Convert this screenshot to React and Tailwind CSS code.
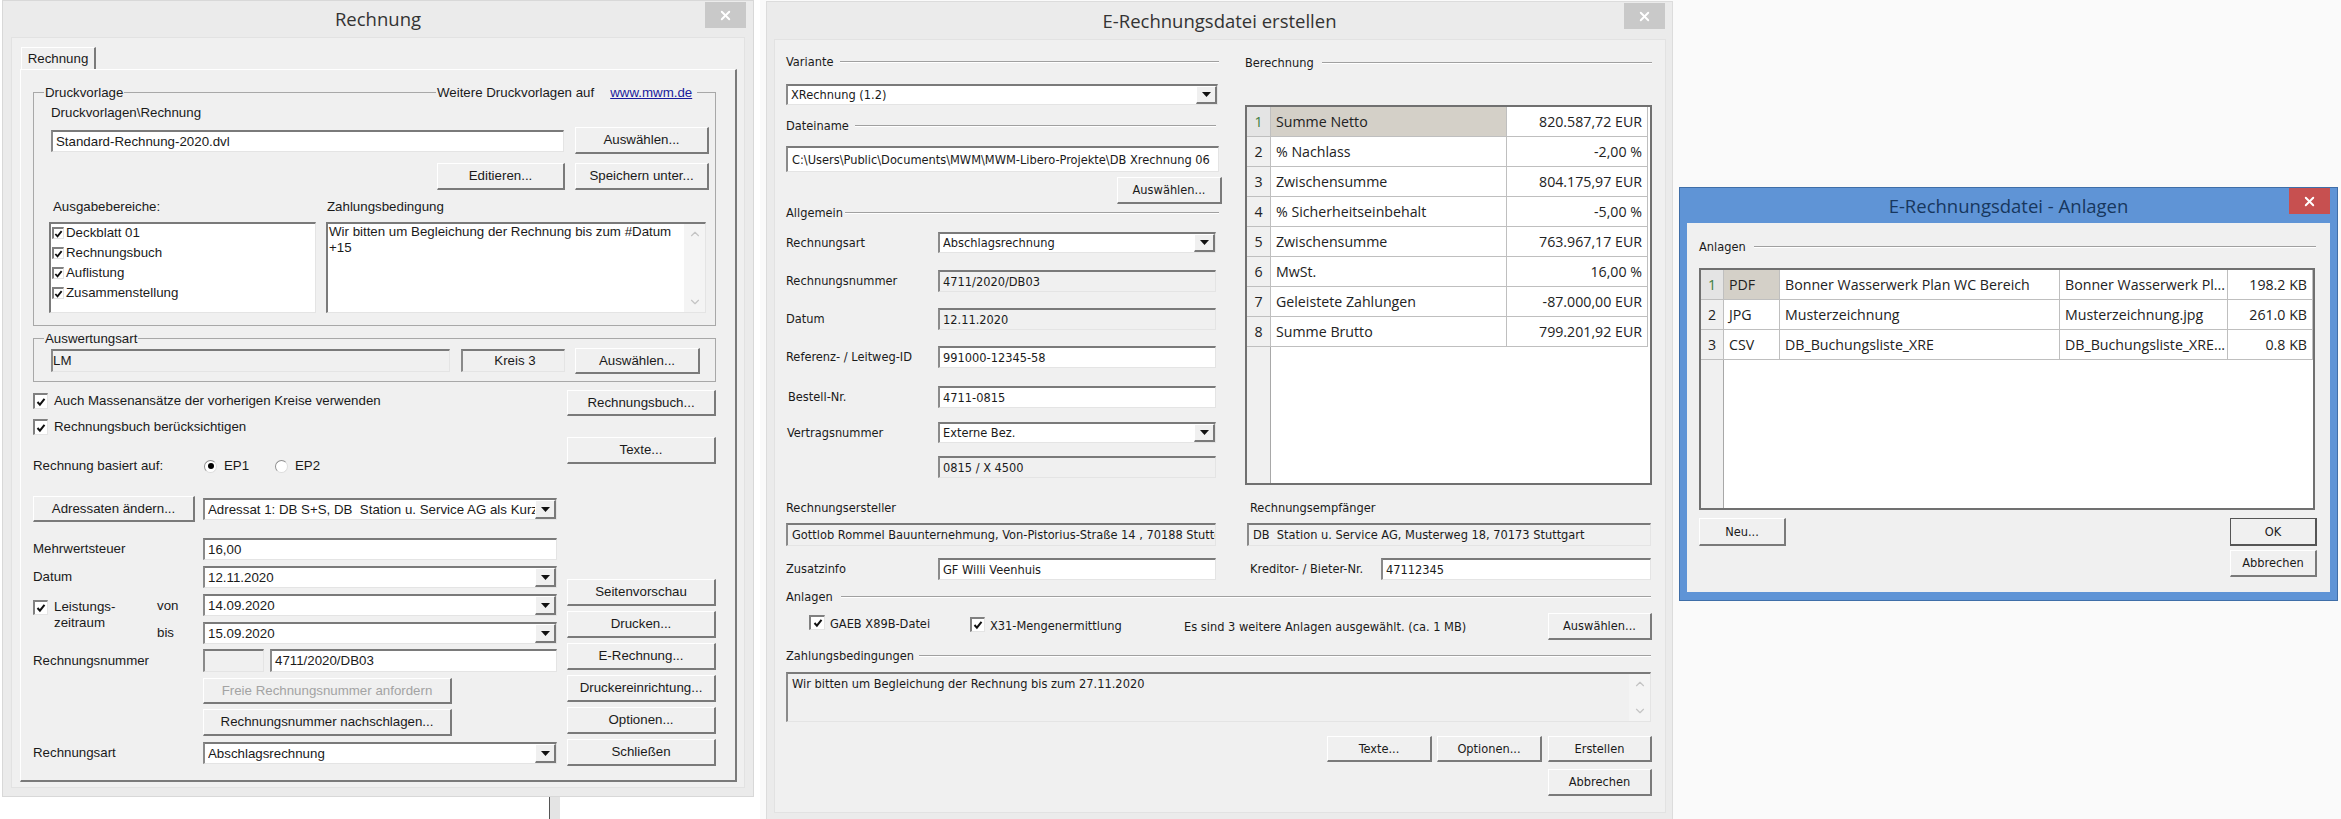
import React from 'react';
import { ChevronUp, ChevronDown, X } from 'lucide-react';

const tahoma = "font-['DejaVu_Sans_Condensed','DejaVu_Sans',sans-serif] text-[12.7px]";
const segoe = "font-['Open_Sans',sans-serif]";

const Btn = ({ children, className = '', disabled }) => (
    <div
        className={`flex items-center justify-center shrink-0 bg-[#f0f0f0] border-t border-l border-t-white border-l-white border-r-2 border-b-2 border-r-[#7a7a7a] border-b-[#7a7a7a] ${disabled ? 'text-[#a3a3a3]' : 'text-[#1a1a1a]'} ${className}`}
    >
        {children}
    </div>
);

const Field = ({ children, className = '', gray, pad = 'pl-[3px]' }) => (
    <div
        className={`flex items-center shrink-0 overflow-hidden whitespace-nowrap border-t-2 border-l-2 border-t-[#7a7a7a] border-l-[#8a8a8a] border-r border-b border-r-[#e4e4e4] border-b-[#e4e4e4] text-[#1a1a1a] ${pad} ${gray ? 'bg-[#f0f0f0]' : 'bg-white'} ${className}`}
    >
        {children}
    </div>
);

const Combo = ({ children, className = '' }) => (
    <Field className={`relative ${className}`}>
        <span className="overflow-hidden flex-1">{children}</span>
        <div className="flex items-center justify-center w-[21px] h-full shrink-0 bg-[#f0f0f0] border-t border-l border-t-white border-l-white border-r-2 border-b-2 border-r-[#7a7a7a] border-b-[#7a7a7a]">
            <svg width="9" height="5" viewBox="0 0 9 5"><path d="M0 0h9L4.5 5z" fill="#111" /></svg>
        </div>
    </Field>
);

const Check = ({ className = '' }) => (
    <div className={`flex items-center justify-center shrink-0 bg-white border-t-2 border-l-2 border-t-[#808080] border-l-[#808080] border-r border-b border-r-[#e4e4e4] border-b-[#e4e4e4] ${className}`}>
        <svg width="10" height="10" viewBox="0 0 10 10"><path d="M1.5 5l2.4 2.6L8.5 1.8" fill="none" stroke="#111" strokeWidth="2" /></svg>
    </div>
);

const Radio = ({ on }) => (
    <div className="flex items-center justify-center w-[13px] h-[13px] rounded-full bg-white border border-[#8f8f8f] border-r-[#dddddd] border-b-[#dddddd]">
        {on && <div className="w-[6px] h-[6px] rounded-full bg-black" />}
    </div>
);

const Line = ({ label, className = '', gap = 'gap-[6px]' }) => (
    <div className={`flex items-center h-[18px] text-[#1a1a1a] ${gap} ${className}`}>
        <span>{label}</span>
        <div className="flex-1 h-[2px] border-t border-t-[#a0a0a0] border-b border-b-white" />
    </div>
);

const Scroll = ({ className = '' }) => (
    <div className={`flex flex-col items-center justify-between w-[21px] h-full shrink-0 bg-[#f4f4f4] py-[3px] text-[#c4c4c4] ${className}`}>
        <ChevronUp size={14} strokeWidth={2} />
        <ChevronDown size={14} strokeWidth={2} />
    </div>
);

const Grid = ({ rows, cols, index, className = '', first }) => (
    <div className={`flex flex-col bg-white border-2 border-[#707070] text-[#222] ${segoe} ${className}`}>
        {rows.map((r, i) => (
            <div key={i} className="flex h-[30px] shrink-0">
                <div className={`flex items-center justify-center shrink-0 ${index} h-full border-b border-r border-[#bfbfbf] ${i === 0 ? 'bg-[#e4e4e4] text-[#3f7f3f]' : 'bg-[#f0f0f0]'}`}>{i + 1}</div>
                {r.map((c, j) => (
                    <div
                        key={j}
                        className={`flex items-center shrink-0 h-full border-b border-r border-[#bfbfbf] px-[5px] whitespace-nowrap overflow-hidden ${cols[j]} ${i === 0 && j === first ? 'bg-[#d4d0c8]' : ''}`}
                    >
                        {c}
                    </div>
                ))}
            </div>
        ))}
        <div className="flex flex-1">
            <div className={`shrink-0 ${index} bg-[#f0f0f0] border-r border-[#a8a8a8]`} />
        </div>
    </div>
);

const CloseBtn = ({ className = '' }) => (
    <div className={`absolute flex items-center justify-center w-[41px] h-[26px] text-white ${className}`}>
        <X size={15} strokeWidth={3} />
    </div>
);

const Rechnung = () => (
    <div className="absolute left-[2px] top-0 w-[752px] h-[797px] bg-[#ebebeb] border border-[#d8d8d8] flex flex-col font-['Liberation_Sans',sans-serif] text-[13.3px] text-[#1a1a1a]">
        <div className={`flex items-center justify-center h-[36px] shrink-0 text-[18.5px] text-[#333] ${segoe}`}>Rechnung</div>
        <CloseBtn className="right-[7px] top-[1px] bg-[#c9c9c9]" />
        <div className="flex-1 mx-[8px] mb-[8px] bg-[#f0f0f0] border border-[#e2e2e2] pl-[8px] flex flex-col">
            <div className="flex items-center justify-center w-[75px] h-[22px] mt-[9px] ml-[1px] border-t border-l border-t-white border-l-white border-r-2 border-r-[#7a7a7a]">Rechnung</div>
            <div className="w-[717px] flex-1 mb-[5px] border-t border-l border-t-white border-l-white border-r-2 border-b-2 border-r-[#7a7a7a] border-b-[#7a7a7a] pl-[12px] flex flex-col">
                <div className="relative mt-[22px] w-[683px] h-[234px] shrink-0 border border-[#a8a8a8] pl-[17px] flex flex-col">
                    <span className="absolute left-[10px] top-[-10px] bg-[#f0f0f0] px-[1px]">Druckvorlage</span>
                    <span className="absolute left-[402px] top-[-10px] bg-[#f0f0f0] px-[1px] flex gap-[16px] w-[261px]">
                        Weitere Druckvorlagen auf <span className="text-[#1a1a9c] underline">www.mwm.de</span>
                    </span>
                    <div className="mt-[11px] h-[18px] flex items-center">Druckvorlagen\Rechnung</div>
                    <div className="mt-[5px] flex gap-[11px] h-[27px]">
                        <Field className="w-[513px] h-[22px] mt-[3px] pt-[1px]">Standard-Rechnung-2020.dvl</Field>
                        <Btn className="w-[134px] h-[27px]">Auswählen...</Btn>
                    </div>
                    <div className="mt-[9px] flex gap-[10px] justify-end pr-[6px]">
                        <Btn className="w-[128px] h-[27px]">Editieren...</Btn>
                        <Btn className="w-[134px] h-[27px]">Speichern unter...</Btn>
                    </div>
                    <div className="mt-[8px] h-[18px] flex items-center pl-[2px]">
                        <span className="w-[274px]">Ausgabebereiche:</span>
                        <span>Zahlungsbedingung</span>
                    </div>
                    <div className="mt-[6px] flex gap-[10px] ml-[-2px]">
                        <div className="w-[267px] h-[91px] flex flex-col bg-white border-t-2 border-l-2 border-t-[#7a7a7a] border-l-[#7a7a7a] border-r border-b border-r-[#e4e4e4] border-b-[#e4e4e4] pt-[2px] pl-[1px] gap-[6px]">
                            {['Deckblatt 01', 'Rechnungsbuch', 'Auflistung', 'Zusammenstellung'].map((t) => (
                                <div key={t} className="flex items-center h-[14px] gap-[2px]">
                                    <Check className="w-[12px] h-[12px]" />
                                    {t}
                                </div>
                            ))}
                        </div>
                        <div className="w-[380px] h-[91px] flex bg-white border-t-2 border-l-2 border-t-[#7a7a7a] border-l-[#7a7a7a] border-r border-b border-r-[#e4e4e4] border-b-[#e4e4e4]">
                            <div className="flex-1 pl-[1px] leading-[16px]">Wir bitten um Begleichung der Rechnung bis zum #Datum<br />+15</div>
                            <Scroll />
                        </div>
                    </div>
                </div>
                <div className="relative mt-[12px] w-[683px] h-[44px] shrink-0 border border-[#a8a8a8] pl-[17px] flex items-start pt-[9px]">
                    <span className="absolute left-[10px] top-[-10px] bg-[#f0f0f0] px-[1px]">Auswertungsart</span>
                    <Field gray pad="pl-0" className="w-[399px] h-[23px] mt-[1px]">LM</Field>
                    <Field gray className="w-[104px] h-[23px] mt-[1px] ml-[11px] justify-center">Kreis 3</Field>
                    <Btn className="w-[125px] h-[26px] ml-[10px]">Auswählen...</Btn>
                </div>
                <div className="mt-[8px] flex gap-[10px] flex-1">
                    <div className="w-[524px] flex flex-col">
                        <div className="mt-[3px] h-[16px] flex items-center gap-[6px]"><Check className="w-[15px] h-[16px]" />Auch Massenansätze der vorherigen Kreise verwenden</div>
                        <div className="mt-[10px] h-[16px] flex items-center gap-[6px]"><Check className="w-[15px] h-[16px]" />Rechnungsbuch berücksichtigen</div>
                        <div className="mt-[21px] h-[20px] flex items-center">
                            <span className="w-[171px]">Rechnung basiert auf:</span>
                            <Radio on />
                            <span className="ml-[7px] w-[51px]">EP1</span>
                            <Radio />
                            <span className="ml-[7px]">EP2</span>
                        </div>
                        <div className="mt-[20px] flex items-center gap-[8px]">
                            <Btn className="w-[162px] h-[26px]">Adressaten ändern...</Btn>
                            <Combo className="w-[354px] h-[22px]">Adressat 1: DB S+S, DB&nbsp; Station u. Service AG als Kurzbezeichnung</Combo>
                        </div>
                        <div className="mt-[16px] flex items-center">
                            <span className="w-[170px]">Mehrwertsteuer</span>
                            <Field className="w-[354px] h-[22px]">16,00</Field>
                        </div>
                        <div className="mt-[6px] flex items-center">
                            <span className="w-[170px]">Datum</span>
                            <Combo className="w-[354px] h-[22px]">12.11.2020</Combo>
                        </div>
                        <div className="mt-[6px] flex">
                            <div className="w-[124px] flex gap-[6px] pt-[5px]">
                                <Check className="w-[15px] h-[15px] mt-[1px]" />
                                <div className="leading-[16px]">Leistungs-<br />zeitraum</div>
                            </div>
                            <div className="w-[46px] flex flex-col gap-[11px] pt-[4px]">
                                <span className="h-[16px] leading-[16px]">von</span>
                                <span className="h-[16px] leading-[16px]">bis</span>
                            </div>
                            <div className="flex flex-col gap-[6px]">
                                <Combo className="w-[354px] h-[22px]">14.09.2020</Combo>
                                <Combo className="w-[354px] h-[22px]">15.09.2020</Combo>
                            </div>
                        </div>
                        <div className="mt-[5px] flex items-center">
                            <span className="w-[170px]">Rechnungsnummer</span>
                            <Field gray className="w-[61px] h-[23px]" />
                            <Field className="w-[287px] h-[23px] ml-[6px]">4711/2020/DB03</Field>
                        </div>
                        <Btn disabled className="mt-[6px] ml-[170px] w-[249px] h-[26px]">Freie Rechnungsnummer anfordern</Btn>
                        <Btn className="mt-[5px] ml-[170px] w-[249px] h-[27px]">Rechnungsnummer nachschlagen...</Btn>
                        <div className="mt-[6px] flex items-center">
                            <span className="w-[170px]">Rechnungsart</span>
                            <Combo className="w-[354px] h-[22px]">Abschlagsrechnung</Combo>
                        </div>
                    </div>
                    <div className="w-[149px] flex flex-col gap-[5px]">
                        <Btn className="w-[149px] h-[26px]">Rechnungsbuch...</Btn>
                        <Btn className="w-[149px] h-[27px] mt-[16px]">Texte...</Btn>
                        <Btn className="w-[149px] h-[27px] mt-[110px]">Seitenvorschau</Btn>
                        <Btn className="w-[149px] h-[27px]">Drucken...</Btn>
                        <Btn className="w-[149px] h-[27px]">E-Rechnung...</Btn>
                        <Btn className="w-[149px] h-[27px]">Druckereinrichtung...</Btn>
                        <Btn className="w-[149px] h-[27px]">Optionen...</Btn>
                        <Btn className="w-[149px] h-[27px]">Schließen</Btn>
                    </div>
                </div>
            </div>
        </div>
    </div>
);

const summen = [
    ['Summe Netto', '820.587,72 EUR'],
    ['% Nachlass', '-2,00 %'],
    ['Zwischensumme', '804.175,97 EUR'],
    ['% Sicherheitseinbehalt', '-5,00 %'],
    ['Zwischensumme', '763.967,17 EUR'],
    ['MwSt.', '16,00 %'],
    ['Geleistete Zahlungen', '-87.000,00 EUR'],
    ['Summe Brutto', '799.201,92 EUR'],
];

const Erstellen = () => (
    <div className={`absolute left-[766px] top-[1px] w-[907px] h-[818px] bg-[#ebebeb] border-l border-r border-t border-[#dcdcdc] flex flex-col ${tahoma} text-[#1a1a1a]`}>
        <div className={`flex items-center justify-center h-[37px] shrink-0 text-[18.5px] text-[#333] ${segoe}`}>E-Rechnungsdatei erstellen</div>
        <CloseBtn className="right-[7px] top-[1px] bg-[#c9c9c9]" />
        <div className="w-[892px] h-[774px] shrink-0 ml-[7px] bg-[#f0f0f0] border border-[#e2e2e2] pl-[11px] pt-[13px] flex flex-col">
            <div className="flex h-[432px] shrink-0">
                <div className="w-[436px] flex flex-col shrink-0">
                    <Line label="Variante" className="w-[433px]" gap="gap-[7px]" />
                    <Combo className="mt-[13px] w-[432px] h-[21px]">XRechnung (1.2)</Combo>
                    <Line label="Dateiname" className="mt-[12px] w-[430px]" />
                    <Field pad="pl-[4px]" className="mt-[11px] w-[433px] h-[26px]">C:\Users\Public\Documents\MWM\MWM-Libero-Projekte\DB Xrechnung 06</Field>
                    <Btn className="mt-[5px] ml-[331px] w-[105px] h-[27px]">Auswählen...</Btn>
                    <Line label="Allgemein" className="w-[433px]" gap="gap-[2px]" />
                    <div className="mt-[10px] flex items-center"><span className="w-[152px]">Rechnungsart</span><Combo className="w-[278px] h-[21px]">Abschlagsrechnung</Combo></div>
                    <div className="mt-[17px] flex items-center"><span className="w-[152px]">Rechnungsnummer</span><Field gray className="w-[278px] h-[22px]">4711/2020/DB03</Field></div>
                    <div className="mt-[16px] flex items-center"><span className="w-[152px]">Datum</span><Field gray className="w-[278px] h-[22px]">12.11.2020</Field></div>
                    <div className="mt-[16px] flex items-center"><span className="w-[152px]">Referenz- / Leitweg-ID</span><Field className="w-[278px] h-[22px]">991000-12345-58</Field></div>
                    <div className="mt-[18px] flex items-center"><span className="w-[152px] pl-[2px]">Bestell-Nr.</span><Field className="w-[278px] h-[22px]">4711-0815</Field></div>
                    <div className="mt-[14px] flex items-center"><span className="w-[152px] pl-[1px]">Vertragsnummer</span><Combo className="w-[278px] h-[21px]">Externe Bez.</Combo></div>
                    <Field gray className="mt-[13px] ml-[152px] w-[278px] h-[22px]">0815 / X 4500</Field>
                </div>
                <div className="ml-[23px] w-[407px] flex flex-col pt-[1px]">
                    <Line label="Berechnung" gap="gap-[8px]" />
                    <Grid
                        className="mt-[33px] w-[407px] h-[380px] text-[14.2px]"
                        rows={summen}
                        index="w-[24px]"
                        cols={['w-[236px]', 'w-[141px] justify-end']}
                        first={0}
                    />
                </div>
            </div>
            <div className="mt-[14px] flex h-[18px] items-center">
                <span className="w-[464px]">Rechnungsersteller</span>
                <span>Rechnungsempfänger</span>
            </div>
            <div className="mt-[6px] flex gap-[31px]">
                <Field gray pad="pl-[4px]" className="w-[430px] h-[23px]">Gottlob Rommel Bauunternehmung, Von-Pistorius-Straße 14 , 70188 Stuttgart</Field>
                <Field gray pad="pl-[4px]" className="w-[404px] h-[23px]">DB&nbsp; Station u. Service AG, Musterweg 18, 70173 Stuttgart</Field>
            </div>
            <div className="mt-[12px] flex items-center">
                <span className="w-[152px]">Zusatzinfo</span>
                <Field className="w-[278px] h-[22px]">GF Willi Veenhuis</Field>
                <span className="w-[131px] ml-[34px]">Kreditor- / Bieter-Nr.</span>
                <Field className="w-[270px] h-[22px]">47112345</Field>
            </div>
            <Line label="Anlagen" className="mt-[8px] w-[865px]" gap="gap-[8px]" />
            <div className="mt-[7px] flex h-[27px] w-[866px]">
                <div className="ml-[23px] w-[161px] flex items-start gap-[5px] pt-[1px]"><Check className="w-[16px] h-[15px] mt-[1px]" /><span>GAEB X89B-Datei</span></div>
                <div className="w-[214px] flex items-start gap-[5px] pt-[3px]"><Check className="w-[15px] h-[15px] mt-[1px]" /><span>X31-Mengenermittlung</span></div>
                <div className="flex-1 flex items-center pt-[1px]">Es sind 3 weitere Anlagen ausgewählt. (ca. 1 MB)</div>
                <Btn className="w-[104px] h-[27px]">Auswählen...</Btn>
            </div>
            <Line label="Zahlungsbedingungen" className="mt-[7px] w-[865px]" gap="gap-[5px]" />
            <div className="mt-[7px] w-[865px] h-[50px] flex bg-[#f0f0f0] border-t-2 border-l-2 border-t-[#7a7a7a] border-l-[#8a8a8a] border-r border-b border-r-[#e4e4e4] border-b-[#e4e4e4]">
                <div className="flex-1 pl-[4px]">Wir bitten um Begleichung der Rechnung bis zum 27.11.2020</div>
                <Scroll />
            </div>
            <div className="mt-[14px] w-[866px] flex justify-end gap-[5px]">
                <Btn className="w-[105px] h-[26px]">Texte...</Btn>
                <Btn className="w-[105px] h-[26px]">Optionen...</Btn>
                <Btn className="w-[104px] h-[26px] ml-[1px]">Erstellen</Btn>
            </div>
            <Btn className="mt-[7px] ml-[762px] w-[104px] h-[27px]">Abbrechen</Btn>
        </div>
    </div>
);

const anlagen = [
    ['PDF', 'Bonner Wasserwerk Plan WC Bereich', 'Bonner Wasserwerk Pl...', '198.2 KB'],
    ['JPG', 'Musterzeichnung', 'Musterzeichnung.jpg', '261.0 KB'],
    ['CSV', 'DB_Buchungsliste_XRE', 'DB_Buchungsliste_XRE...', '0.8 KB'],
];

const Anlagen = () => (
    <div className={`absolute left-[1679px] top-[187px] w-[659px] h-[414px] bg-[#5f94d6] border border-[#3f6ea8] flex flex-col ${tahoma} text-[#1a1a1a]`}>
        <div className={`flex items-center justify-center h-[35px] shrink-0 text-[18.5px] text-[#17375e] ${segoe}`}>E-Rechnungsdatei - Anlagen</div>
        <CloseBtn className="right-[7px] top-0 bg-[#c75050]" />
        <div className="mx-[7px] h-[369px] shrink-0 bg-[#f0f0f0] pl-[12px] pt-[15px] flex flex-col">
            <Line label="Anlagen" className="w-[617px]" gap="gap-[8px]" />
            <Grid
                className="mt-[12px] w-[616px] h-[242px] text-[14.2px]"
                rows={anlagen}
                index="w-[23px]"
                cols={['w-[56px]', 'w-[280px]', 'w-[168px]', 'w-[85px] justify-end']}
                first={0}
            />
            <div className="mt-[8px] w-[618px] flex justify-between">
                <Btn className="w-[87px] h-[28px]">Neu...</Btn>
                <div className="flex flex-col gap-[4px]">
                    <div className="flex items-center justify-center w-[87px] h-[28px] bg-[#f0f0f0] border border-[#555] border-r-2 border-b-2">OK</div>
                    <Btn className="w-[87px] h-[27px]">Abbrechen</Btn>
                </div>
            </div>
        </div>
    </div>
);

export default function App() {
    return (
        <div className="relative w-[2341px] h-[819px] overflow-hidden bg-[#fafafa]">
            <div className="absolute left-0 top-0 w-[760px] h-[819px] bg-white" />
            <div className="absolute left-[549px] top-[797px] w-[11px] h-[22px] bg-[#e4e4e4] border-l border-[#555]" />
            <Rechnung />
            <Erstellen />
            <Anlagen />
        </div>
    );
}
